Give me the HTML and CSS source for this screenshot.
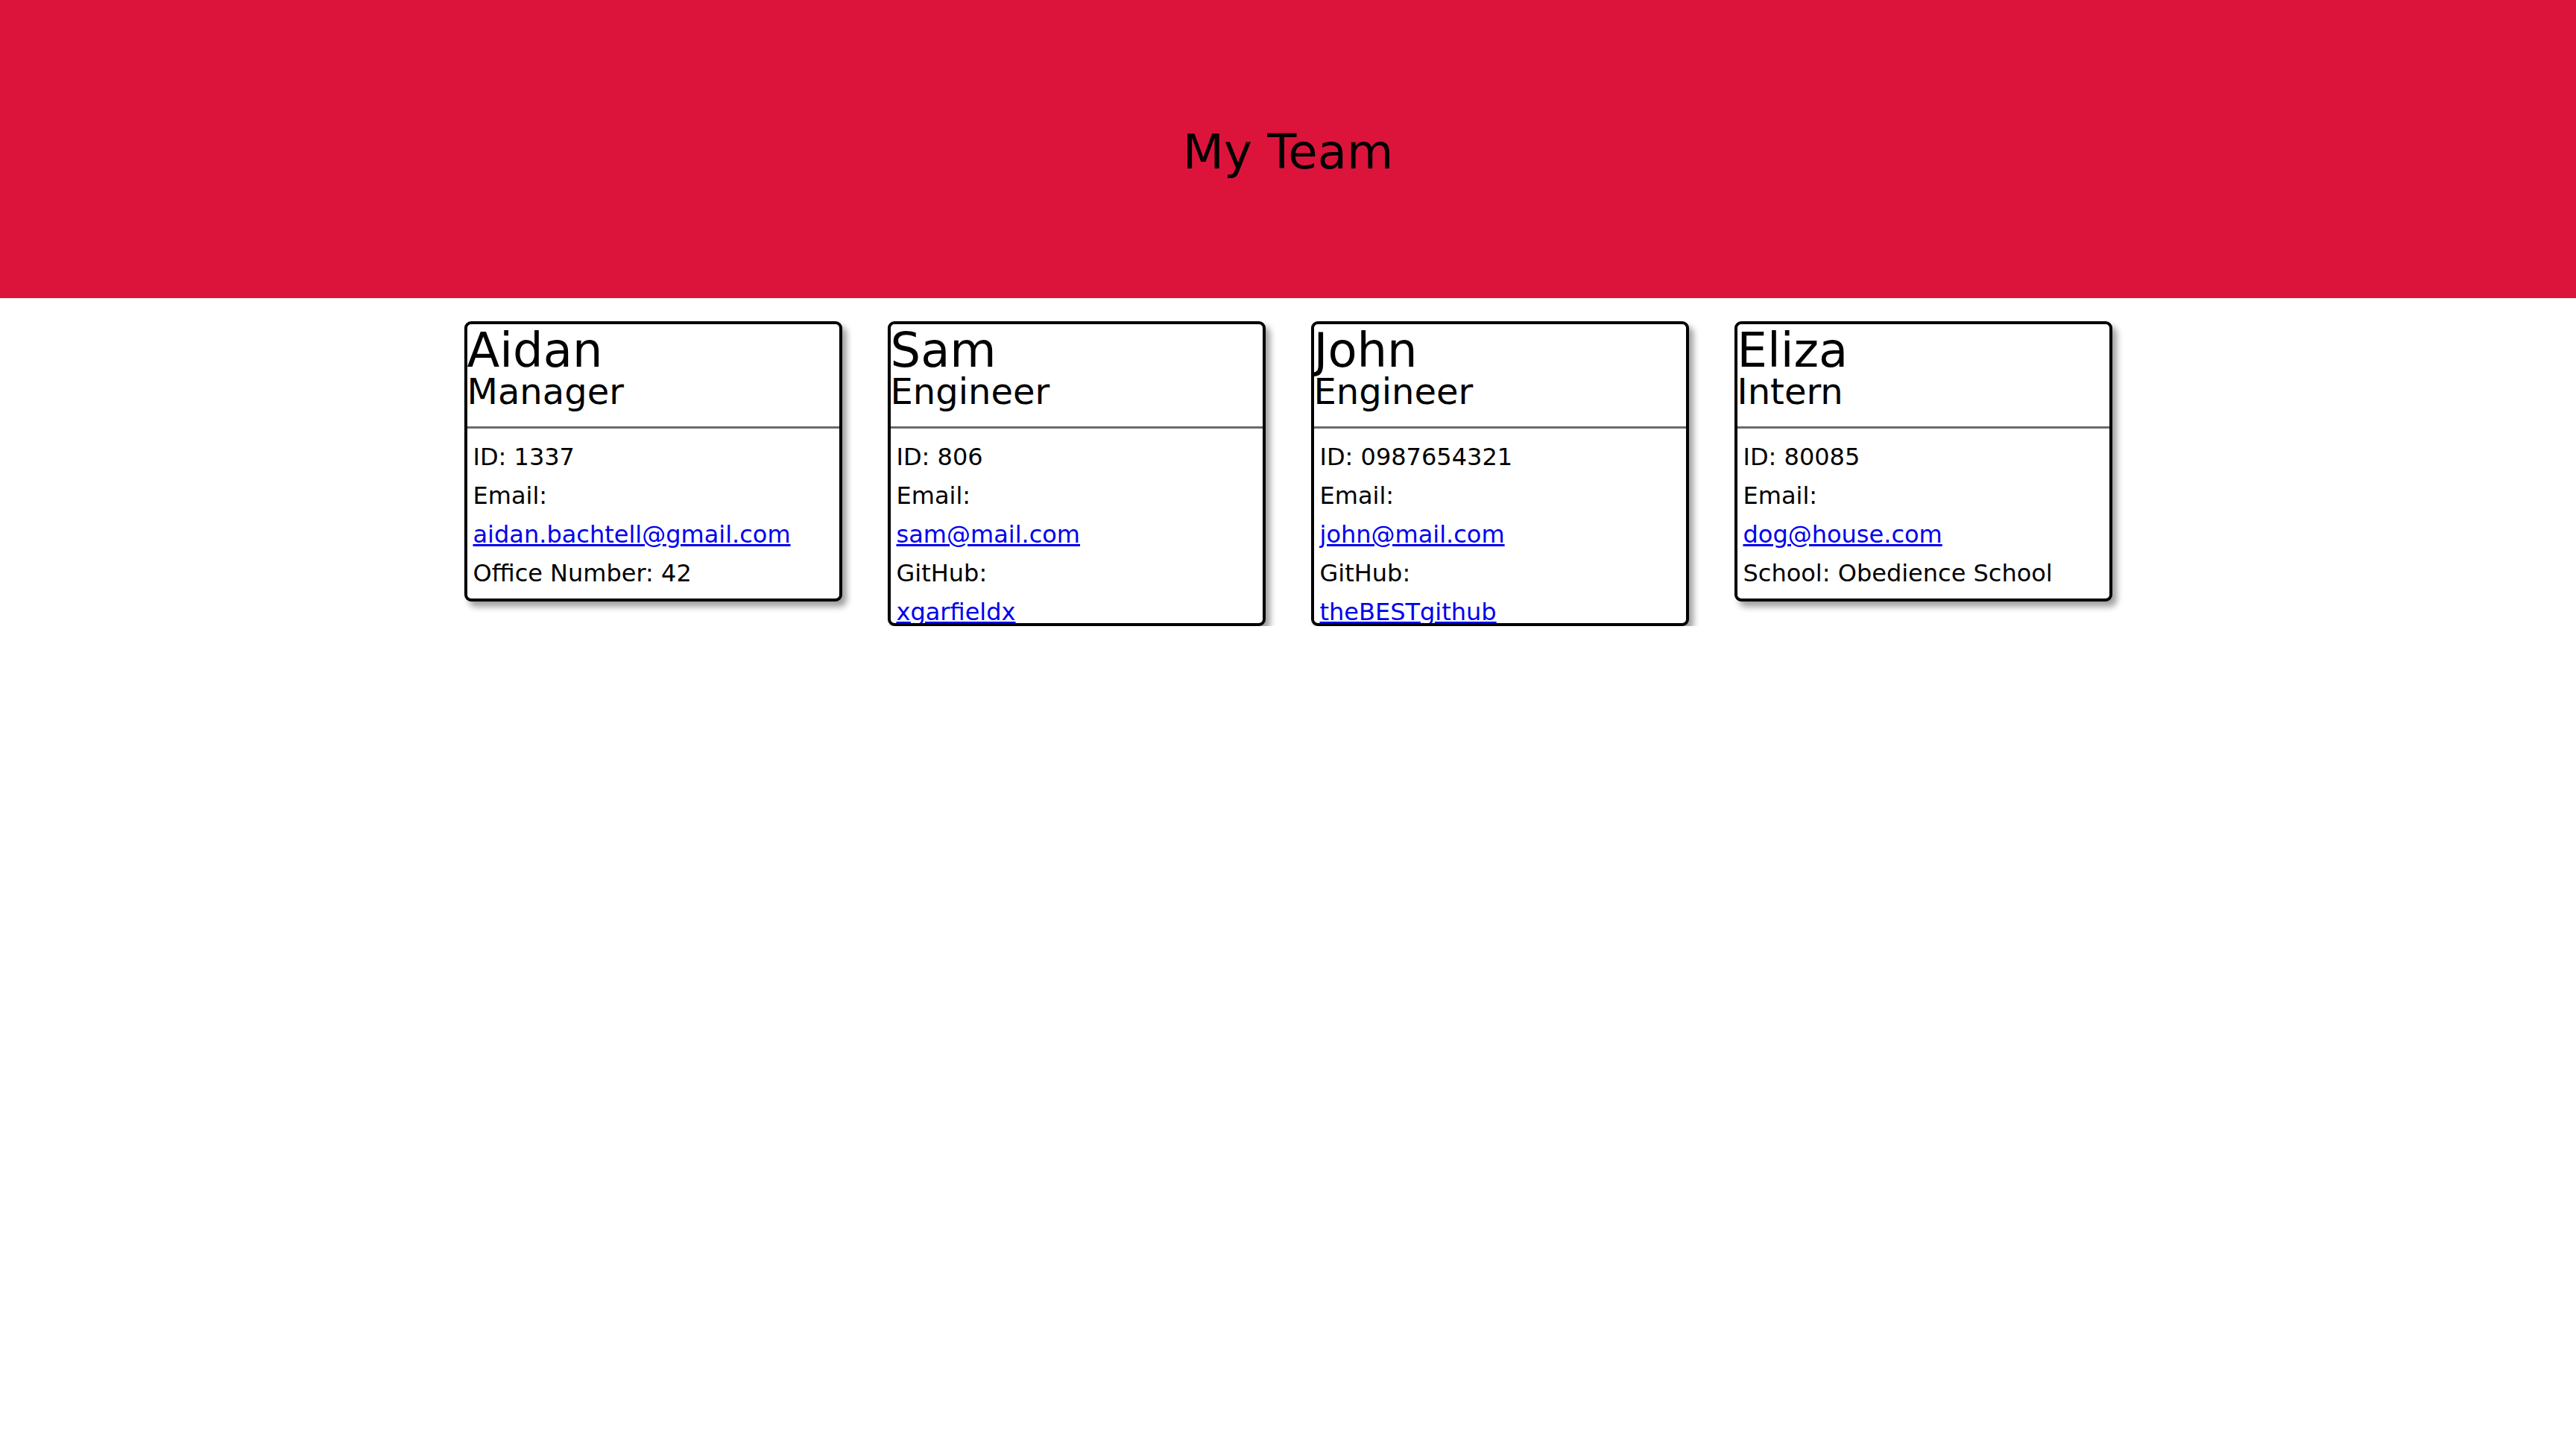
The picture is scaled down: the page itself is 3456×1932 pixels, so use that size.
FILE: index.html
```html
<!DOCTYPE html>
<html lang="en">
<head>
<meta charset="utf-8">
<title>My Team</title>
<link rel="stylesheet" href="styles.css">
</head>
<body>
<header class="banner">
  <h1 class="banner-title">My Team</h1>
</header>
<main class="team">
  <section class="card">
    <div class="card-head">
      <div class="card-name">Aidan</div>
      <div class="card-role">Manager</div>
    </div>
    <div class="card-rule"></div>
    <ul class="card-body">
      <li>ID: 1337</li>
      <li>Email:</li>
      <li><a href="#">aidan.bachtell@gmail.com</a></li>
      <li>Office Number: 42</li>
    </ul>
  </section>
  <section class="card">
    <div class="card-head">
      <div class="card-name">Sam</div>
      <div class="card-role">Engineer</div>
    </div>
    <div class="card-rule"></div>
    <ul class="card-body card-body--tight">
      <li>ID: 806</li>
      <li>Email:</li>
      <li><a href="#">sam@mail.com</a></li>
      <li>GitHub:</li>
      <li><a href="#">xgarfieldx</a></li>
    </ul>
  </section>
  <section class="card">
    <div class="card-head">
      <div class="card-name">John</div>
      <div class="card-role">Engineer</div>
    </div>
    <div class="card-rule"></div>
    <ul class="card-body card-body--tight">
      <li>ID: 0987654321</li>
      <li>Email:</li>
      <li><a href="#">john@mail.com</a></li>
      <li>GitHub:</li>
      <li><a href="#">theBESTgithub</a></li>
    </ul>
  </section>
  <section class="card">
    <div class="card-head">
      <div class="card-name">Eliza</div>
      <div class="card-role">Intern</div>
    </div>
    <div class="card-rule"></div>
    <ul class="card-body">
      <li>ID: 80085</li>
      <li>Email:</li>
      <li><a href="#">dog@house.com</a></li>
      <li>School: Obedience School</li>
    </ul>
  </section>
</main>
</body>
</html>
```

FILE: styles.css
```css
* {
  box-sizing: border-box;
}

html, body {
  margin: 0;
  padding: 0;
  background: #ffffff;
  color: #000000;
  font-family: "DejaVu Sans", Verdana, sans-serif;
}

.banner {
  height: 400px;
  background: #dc143c;
  display: flex;
  align-items: center;
  justify-content: center;
  padding-top: 8px;
}

.banner-title {
  margin: 0;
  font-size: 64px;
  font-weight: normal;
  line-height: normal;
}

.team {
  margin-top: 31px;
  display: flex;
  justify-content: center;
  align-items: flex-start;
  gap: 61px;
}

.card {
  width: 507px;
  border: 4px solid #000000;
  border-radius: 9px;
  background: #ffffff;
  box-shadow: 6px 7px 9px rgba(0, 0, 0, 0.38);
  overflow: hidden;
}

.card-head {
  padding-bottom: 27px;
}

.card-name {
  font-size: 64px;
  line-height: 70px;
}

.card-role {
  font-size: 48px;
  line-height: 40px;
}

.card-rule {
  height: 3px;
  background: #6b6b6b;
}

.card-body {
  list-style: none;
  margin: 0;
  padding: 12px 8px 8px;
  font-size: 32px;
  line-height: 52px;
}

.card-body--tight {
  padding-bottom: 0;
  margin-bottom: -11px;
}

.card-body li {
  white-space: nowrap;
}

.card-body a {
  color: #0000ee;
  text-decoration: underline;
}
```
